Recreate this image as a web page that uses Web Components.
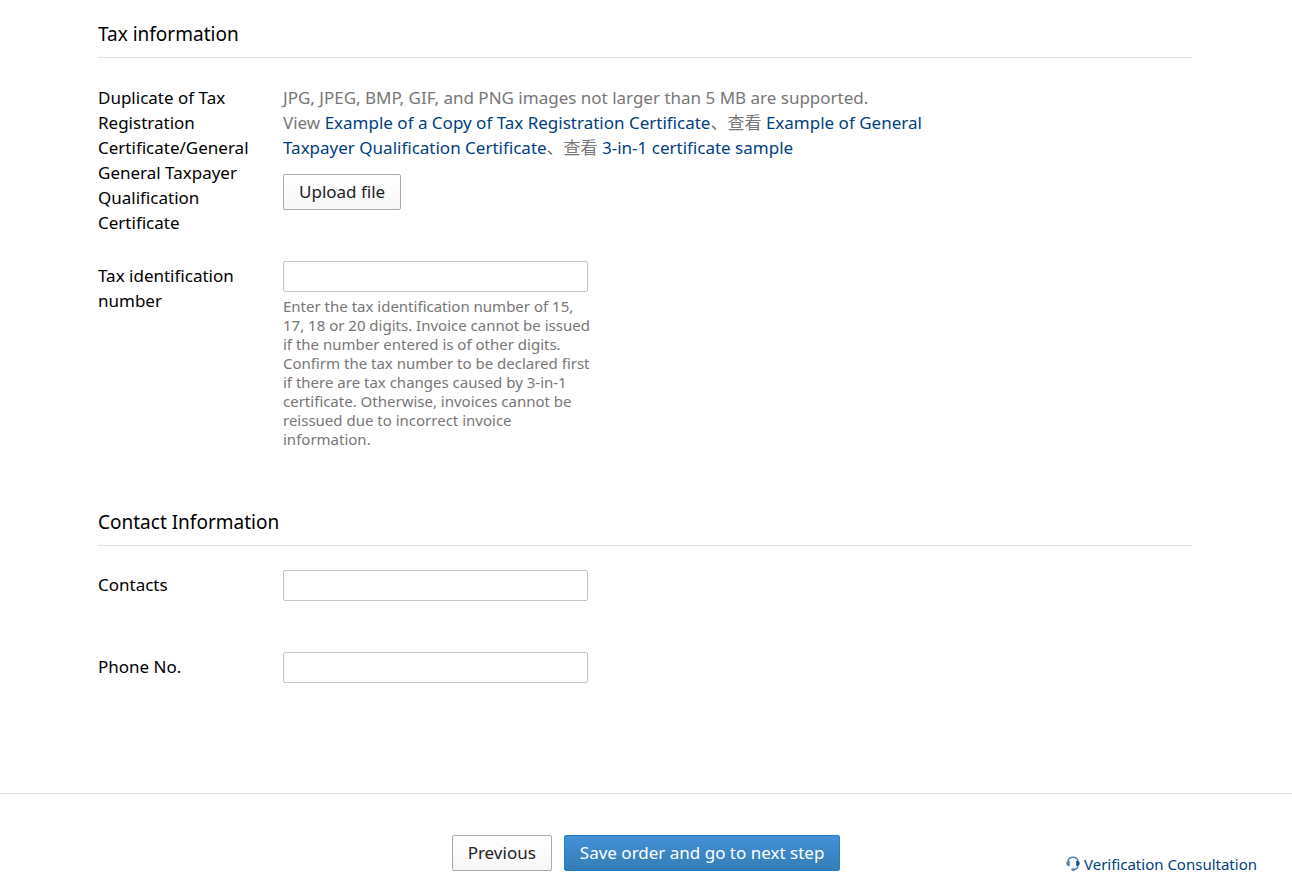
<!DOCTYPE html>
<html lang="en">
<head>
<meta charset="utf-8">
<meta name="viewport" content="width=device-width, initial-scale=1">
<title>Tax and contact information</title>
<style>
  body {
    margin: 0;
    background: #fff;
    color: #000;
    font: 17px/25px "Noto Sans", "Noto Sans CJK SC", sans-serif;
    --link: #004080;
    --muted: #777;
    --rule: #e4e4e4;
  }
</style>
</head>
<body>
<order-page></order-page>

<template id="order-page">
  <style>
    :host { display: block; }
    main { padding: 0 99px 46px 98px; }
    a { color: var(--link); text-decoration: none; }
    a:hover { text-decoration: underline; }
    p { margin: 0 0 14px; max-width: 660px; color: var(--muted); }
  </style>
  <main>
    <form-section heading="Tax information">
      <form-row>
        <span slot="label">Duplicate of Tax Registration Certificate/General General Taxpayer Qualification Certificate</span>
        <p>JPG, JPEG, BMP, GIF, and PNG images not larger than 5 MB are supported.<br>View <a href="#registration">Example of a Copy of Tax Registration Certificate</a>、查看 <a href="#qualification">Example of General Taxpayer Qualification Certificate</a>、查看 <a href="#three-in-one">3-in-1 certificate sample</a></p>
        <push-button>Upload file</push-button>
      </form-row>
      <text-field label="Tax identification number" name="taxId">Enter the tax identification number of 15, 17, 18 or 20 digits. Invoice cannot be issued if the number entered is of other digits. Confirm the tax number to be declared first if there are tax changes caused by 3-in-1 certificate. Otherwise, invoices cannot be reissued due to incorrect invoice information.</text-field>
    </form-section>
    <form-section heading="Contact Information">
      <text-field label="Contacts" name="contact"></text-field>
      <text-field label="Phone No." name="phone"></text-field>
    </form-section>
  </main>
  <page-footer>
    <push-button>Previous</push-button>
    <push-button primary>Save order and go to next step</push-button>
    <consult-link slot="aside">Verification Consultation</consult-link>
  </page-footer>
</template>

<template id="form-section">
  <style>
    :host { display: block; padding-bottom: 39px; }
    h2 {
      margin: 0 0 24px;
      padding: 21px 0 10px;
      border-bottom: 1px solid var(--rule);
      font-size: 19px;
      line-height: 26px;
      font-weight: 400;
    }
    .rows { display: grid; gap: 26px; }
  </style>
  <section>
    <h2></h2>
    <div class="rows"><slot></slot></div>
  </section>
</template>

<template id="form-row">
  <style>
    :host { display: grid; grid-template-columns: 160px minmax(0, 1fr); column-gap: 25px; }
    .label, .body { padding-top: 3px; }
  </style>
  <div class="label"><slot name="label"></slot></div>
  <div class="body"><slot></slot></div>
</template>

<template id="text-field">
  <style>
    :host { display: grid; grid-template-columns: 160px minmax(0, 312px); column-gap: 25px; min-height: 56px; }
    label { padding-top: 2px; }
    input {
      display: block;
      box-sizing: border-box;
      width: 100%;
      max-width: 305px;
      height: 31px;
      margin: 0 0 5px;
      padding: 2px 8px;
      border: 1px solid #c4c4c4;
      border-radius: 2px;
      background: #fff;
      font: inherit;
    }
    .hint { color: var(--muted); font-size: 15px; line-height: 19px; }
  </style>
  <label for="field"></label>
  <div>
    <input id="field" type="text">
    <div class="hint"><slot></slot></div>
  </div>
</template>

<template id="push-button">
  <style>
    :host { display: inline-block; vertical-align: top; }
    button {
      display: block;
      height: 36px;
      padding: 0 15px;
      border: 1px solid #aaa;
      border-radius: 2px;
      background: linear-gradient(#fff, #f7f7f7);
      color: #222;
      font: inherit;
      line-height: 24px;
      white-space: nowrap;
      cursor: pointer;
    }
    :host([primary]) button {
      border-color: #1f7fc9;
      background: linear-gradient(#4490d8, #347db6);
      color: #fff;
    }
  </style>
  <button type="button"><slot></slot></button>
</template>

<template id="page-footer">
  <style>
    :host { display: block; border-top: 1px solid var(--rule); }
    footer {
      display: grid;
      grid-template-columns: 1fr auto 1fr;
      align-items: start;
      padding: 41px 35px 21px;
    }
    .actions { grid-column: 2; display: flex; gap: 12px; }
    .aside { justify-self: end; padding-top: 19px; }
  </style>
  <footer>
    <div class="actions"><slot></slot></div>
    <div class="aside"><slot name="aside"></slot></div>
  </footer>
</template>

<template id="consult-link">
  <style>
    :host { display: block; }
    a { display: flex; align-items: center; gap: 4px; color: var(--link); font-size: 15px; line-height: 20px; text-decoration: none; white-space: nowrap; }
    svg { display: block; width: 14px; height: 16px; }
  </style>
  <a href="#consultation">
    <svg viewBox="0 0 14 16" fill="none" aria-hidden="true">
      <path d="M1.900 6C2.200 2.800 4.200 1.200 7 1.200S11.800 2.800 12.100 6" stroke="#5585ab" stroke-width="1.500"/>
      <path d="M3.800 4.900H2.400C1 5.100.3 6 .3 7.500s.7 2.400 2.100 2.600h1.400z" fill="#5c8aae"/>
      <path d="M10.200 4.900h1.400c1.400.2 2.100 1.100 2.100 2.600s-.7 2.400-2.100 2.600h-1.400z" fill="#1d5588"/>
      <path d="M12 10c-.4 2.300-1.700 3.400-4 3.700" stroke="#4f7fa8" stroke-width="1.300"/>
      <ellipse cx="7.300" cy="13.700" rx="2" ry="1.400" fill="#5c8aae"/>
    </svg>
    <span><slot></slot></span>
  </a>
</template>

<script>
  class TemplateElement extends HTMLElement {
    constructor() {
      super();
      const template = document.getElementById(this.localName);
      this.attachShadow({ mode: "open" }).append(template.content.cloneNode(true));
    }
  }

  class FormSection extends TemplateElement {
    connectedCallback() {
      this.shadowRoot.querySelector("h2").textContent = this.getAttribute("heading");
    }
  }

  class TextField extends TemplateElement {
    connectedCallback() {
      this.shadowRoot.querySelector("label").textContent = this.getAttribute("label");
      this.shadowRoot.querySelector("input").name = this.getAttribute("name");
    }
  }

  customElements.define("push-button", class extends TemplateElement {});
  customElements.define("consult-link", class extends TemplateElement {});
  customElements.define("form-row", class extends TemplateElement {});
  customElements.define("text-field", TextField);
  customElements.define("form-section", FormSection);
  customElements.define("page-footer", class extends TemplateElement {});
  customElements.define("order-page", class extends TemplateElement {});
</script>
</body>
</html>
